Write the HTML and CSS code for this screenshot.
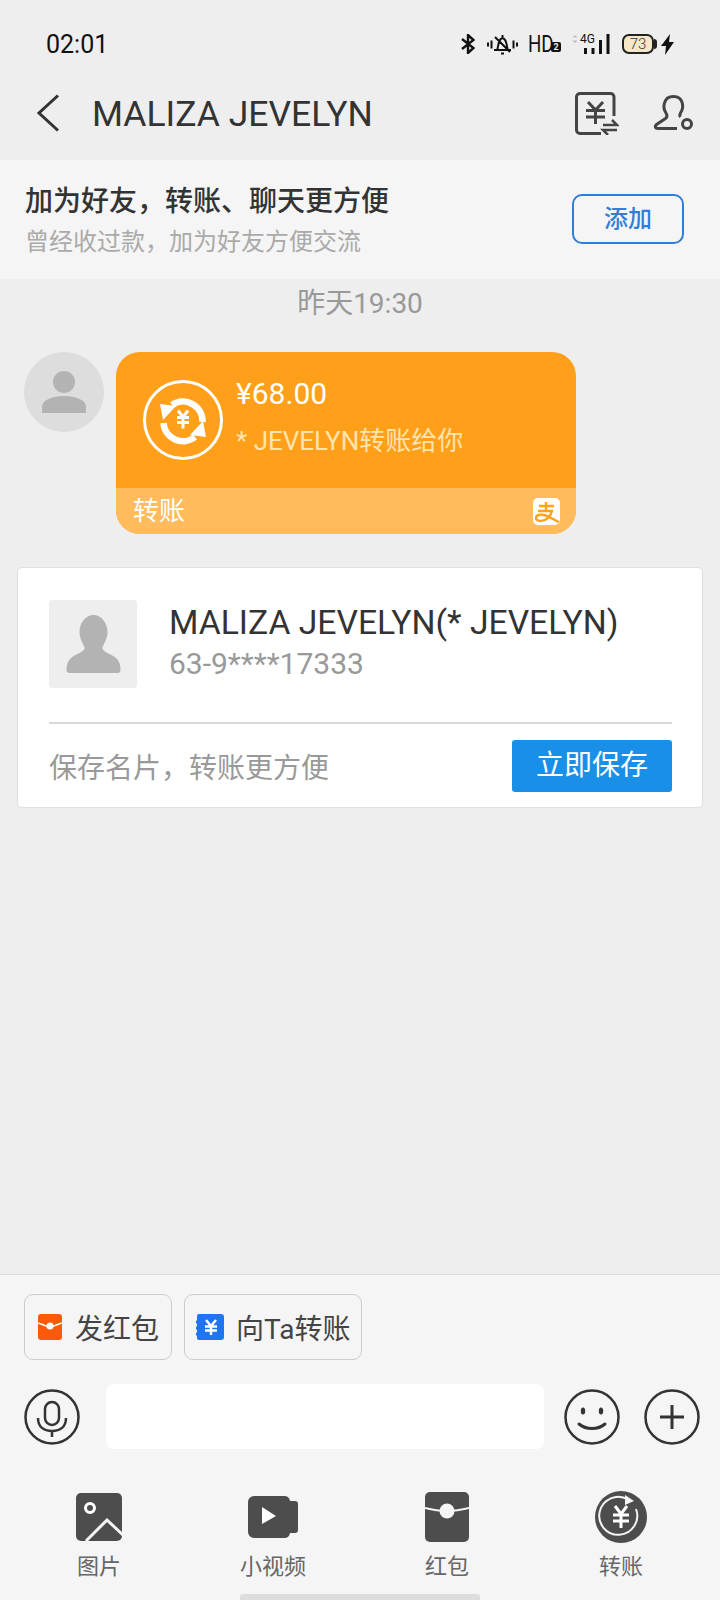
FILE: index.html
```html
<!DOCTYPE html>
<html lang="en">
<head>
    <meta charset="UTF-8">
    <meta name="viewport" content="width=device-width, initial-scale=1.0">
    <title>MALIZA JEVELYN</title>
    <link rel="stylesheet" href="styles.css">
</head>
<body>
<div class="page">

    <div class="status">
        <span class="clock">02:01</span>
        <div class="status-icons">
            <svg class="ic-bt" width="14" height="20" viewBox="0 0 14 20"><path d="M1 5 12.500 14 7 19V1l5.500 5L1 15" fill="none" stroke="#111" stroke-width="2.400"/></svg>
            <svg class="ic-bell" width="31" height="21" viewBox="0 0 31 21"><g fill="none" stroke="#111" stroke-width="2"><path d="M7 16h17M10 16c2-3 0-10 5.500-12 5.500 2 3.500 9 5.500 12M15.500 1v3M8 3l15 15M14 19.500h3"/><path d="M1 8.500v4M4.500 6.500v8M26.500 6.500v8M30 8.500v4"/></g></svg>
            <span class="hd"><span class="hd-text">HD</span><b>2</b></span>
            <div class="net">
                <span class="net-label">4G</span>
                <svg width="40" height="20" viewBox="0 0 40 20"><path d="M3 1 5.500 3.500H.5ZM3 9 5.500 6.500H.5Z" fill="#bbb"/><path d="M12 14h3v6h-3zM19.500 14h3v6h-3zM27 6h3v14h-3zM34.500 0h3v20h-3z" fill="#111"/></svg>
            </div>
            <span class="battery">73</span>
            <svg width="13" height="21" viewBox="0 0 13 21"><path d="M9 0 0 12h5l-1 9 9-13H8Z" fill="#111"/></svg>
        </div>
    </div>

    <div class="nav">
        <svg class="back" width="24" height="38" viewBox="0 0 24 38"><path d="M22 1.500 3 19l19 17.500" fill="none" stroke="#333" stroke-width="3"/></svg>
        <span class="nav-title">MALIZA JEVELYN</span>
        <svg class="nav-bill" width="44" height="43" viewBox="0 0 44 43"><g fill="none" stroke="#444" stroke-width="3"><path d="M39 24V5a3.500 3.500 0 0 0-3.500-3.500H5A3.500 3.500 0 0 0 1.500 5v33A3.500 3.500 0 0 0 5 41.500h21"/><path d="M13 10l7.500 8 7.500-8M11 18.500h19M11 25h19M20.500 18v14"/></g><path d="M28 33h14l-5-5M42 38H28l5 5" fill="none" stroke="#444" stroke-width="2.500"/></svg>
        <svg class="nav-person" width="40" height="36" viewBox="0 0 40 36"><g fill="none" stroke="#444" stroke-width="3"><path d="M24 33.500H5c-3 0-3.500-2.500-1.500-4l9-6c2-1.500 2-3 .5-5.500-3.500-5-3-16.500 7.500-16.500S31 13 27.500 18c-1 2-1 3 0 4"/><circle cx="34" cy="29" r="4.500"/></g></svg>
    </div>

    <div class="banner">
        <div class="banner-text">
            <div class="banner-title">加为好友&#xFF0C;转账、聊天更方便</div>
            <div class="banner-sub">曾经收过款&#xFF0C;加为好友方便交流</div>
        </div>
        <div class="add-btn">添加</div>
    </div>

    <div class="chat">
        <div class="time">昨天19:30</div>

        <div class="msg">
            <div class="avatar">
                <svg width="46" height="42" viewBox="0 0 46 42"><circle cx="23" cy="11" r="11" fill="#b3b3b3"/><path d="M1 42V36C1 29 11 25 23 25s22 4 22 11v6Z" fill="#b3b3b3"/></svg>
            </div>
            <div class="bubble">
                <div class="bubble-main">
                    <svg class="transfer-ic" width="80" height="80" viewBox="0 0 80 80"><circle cx="40" cy="40" r="38.500" fill="none" stroke="#fff" stroke-width="3"/><g fill="none" stroke="#fff" stroke-width="6.500"><path d="M29 25A19.500 19.500 0 0 1 59.500 42"/><path d="M52 57A19.500 19.500 0 0 1 20.500 43"/></g><path d="M17 24 33 26 20 40ZM63 57 47 55 60 41Z" fill="#fff"/><path d="M35 30.500l5 6.500 5-6.500M34 37.500h12M34 42.500h12M40 37v11.500" fill="none" stroke="#fff" stroke-width="3"/></svg>
                    <div class="transfer-text">
                        <div class="amount">¥68.00</div>
                        <div class="transfer-note">* JEVELYN转账给你</div>
                    </div>
                </div>
                <div class="bubble-foot">
                    <span class="foot-label">转账</span>
                    <svg width="27" height="27" viewBox="0 0 27 27"><rect width="27" height="27" rx="5" fill="#fff"/><path d="M6 8h15M13 4v9M5 13h14c-1 5-6 10-11 10-3 0-5-1-5-3 0-3 4-4 8-3 5 1 10 5 15 7" fill="none" stroke="#ffa31a" stroke-width="2.400"/></svg>
                </div>
            </div>
        </div>

        <div class="card">
            <div class="card-top">
                <div class="card-photo">
                    <svg width="57" height="58" viewBox="0 0 56 58"><path d="M28 0c8 0 14 8 14 17 0 6-3 11-5 15-1 3 3 5 9 8 6 3 9 7 9 15 0 2-1 3-3 3H4c-2 0-3-1-3-3 0-8 3-12 9-15s10-5 9-8c-2-4-5-9-5-15C14 8 20 0 28 0Z" fill="#b3b3b3"/></svg>
                </div>
                <div class="card-info">
                    <div class="card-name">MALIZA JEVELYN(* JEVELYN)</div>
                    <div class="card-phone">63-9****17333</div>
                </div>
            </div>
            <div class="card-bottom">
                <span class="card-hint">保存名片&#xFF0C;转账更方便</span>
                <div class="save-btn">立即保存</div>
            </div>
        </div>
    </div>

    <div class="panel">
        <div class="chips">
            <div class="chip chip-red">
                <svg width="24" height="26" viewBox="0 0 24 26"><rect width="24" height="26" rx="3" fill="#fb5a0a"/><path d="M0 9c4 1 7 3 9 3h6c2 0 5-2 9-3" fill="none" stroke="#fff" stroke-width="1.500"/><circle cx="12" cy="12" r="3.500" fill="#fff"/></svg>
                <span>发红包</span>
            </div>
            <div class="chip chip-blue">
                <svg width="28" height="26" viewBox="0 0 28 26"><path d="M3 0h22a3 3 0 0 1 3 3v20a3 3 0 0 1-3 3H3a2 2 0 0 1-2-2v-2.500a1.500 1.500 0 0 1 0-3v-3a1.500 1.500 0 0 1 0-3v-3a1.500 1.500 0 0 1 0-3V2a2 2 0 0 1 2-2Z" fill="#1f74f0"/><path d="M10 6l5 6 5-6M9 12.500h12M9 16.500h12M15 12v9" fill="none" stroke="#fff" stroke-width="2.500"/></svg>
                <span>向Ta转账</span>
            </div>
        </div>

        <div class="input-row">
            <svg width="56" height="56" viewBox="0 0 56 56"><g fill="none" stroke="#333" stroke-width="2.500"><circle cx="28" cy="28" r="26.500"/><rect x="21" y="13" width="14" height="23" rx="7"/><path d="M14 29c0 9 6 13 14 13s14-4 14-13M28 42v6"/></g></svg>
            <div class="text-box"></div>
            <svg width="56" height="56" viewBox="0 0 56 56"><g fill="none" stroke="#333" stroke-width="2.500"><circle cx="28" cy="28" r="26.500"/><path d="M15 35c7 6 19 6 26 0" stroke-width="3" stroke-linecap="round"/></g><ellipse cx="19" cy="22" rx="2.200" ry="3.500" fill="#333"/><ellipse cx="37" cy="22" rx="2.200" ry="3.500" fill="#333"/></svg>
            <svg class="plus" width="56" height="56" viewBox="0 0 56 56"><g fill="none" stroke="#333" stroke-width="2.500"><circle cx="28" cy="28" r="26.500"/><path d="M16 28h24M28 16v24" stroke-width="3"/></g></svg>
        </div>

        <div class="tools">
            <div class="tool">
                <div class="tool-ic">
                    <svg width="48" height="48" viewBox="0 0 48 48"><rect x="1" width="46" height="48" rx="5" fill="#4d4d4d"/><circle cx="15" cy="15" r="4.500" fill="none" stroke="#fff" stroke-width="3"/><path d="M11 48 32 27l16 15" fill="none" stroke="#f5f5f5" stroke-width="3"/></svg>
                </div>
                <span>图片</span>
            </div>
            <div class="tool">
                <div class="tool-ic">
                    <svg width="50" height="42" viewBox="0 0 50 42"><path d="M6 0h31a6 6 0 0 1 5 5h5a3 3 0 0 1 3 3v26a3 3 0 0 1-3 3h-5a6 6 0 0 1-5 5H6a6 6 0 0 1-6-6V6a6 6 0 0 1 6-6Z" fill="#4d4d4d"/><path d="M14 11 28 20 14 28Z" fill="#fff"/></svg>
                </div>
                <span>小视频</span>
            </div>
            <div class="tool">
                <div class="tool-ic">
                    <svg width="44" height="50" viewBox="0 0 44 50"><rect width="44" height="50" rx="5" fill="#4d4d4d"/><path d="M0 16c8 2 14 3 22 3s14-1 22-3" fill="none" stroke="#f5f5f5" stroke-width="2"/><circle cx="22" cy="19" r="7.500" fill="#f5f5f5"/></svg>
                </div>
                <span>红包</span>
            </div>
            <div class="tool">
                <div class="tool-ic">
                    <svg width="52" height="52" viewBox="0 0 52 52"><circle cx="26" cy="26" r="26" fill="#4d4d4d"/><path d="M41 18A19 19 0 1 1 33 8.500" fill="none" stroke="#f5f5f5" stroke-width="2"/><path d="M30 4 39 10 30 14Z" fill="#f5f5f5"/><path d="M20 15l6 8 6-8M18 24h16M18 30h16M26 23v14" fill="none" stroke="#fff" stroke-width="3"/></svg>
                </div>
                <span>转账</span>
            </div>
        </div>
        <div class="home-bar"></div>
    </div>

</div>
</body>
</html>
```

FILE: styles.css
```css
* {
    box-sizing: border-box;
}
body {
    margin: 0;
    font-family: Roboto, "Noto Sans CJK SC", sans-serif;
    background-color: #eeeeee;
}
.page {
    width: 720px;
    height: 1600px;
    display: flex;
    flex-direction: column;
    overflow: hidden;
}

/* status bar */
.status {
    height: 84px;
    padding: 4px 46px 0 46px;
    display: flex;
    align-items: center;
    justify-content: space-between;
    flex-shrink: 0;
}
.clock {
    font-size: 25px;
    color: #111;
}
.status-icons {
    display: flex;
    align-items: center;
}
.ic-bt {
    margin-right: 12px;
}
.ic-bell {
    margin-right: 10px;
}
.hd {
    width: 33px;
    margin-right: 11px;
    display: flex;
    align-items: flex-end;
    color: #111;
}
.hd-text {
    width: 23px;
    font-size: 24px;
    line-height: 28px;
    transform: scaleX(.78);
    transform-origin: left center;
}
.hd b {
    font-size: 9px;
    line-height: 10px;
    width: 10px;
    height: 10px;
    margin-bottom: 6px;
    text-align: center;
    background: #111;
    color: #eee;
    border-radius: 2px;
}
.net {
    position: relative;
    margin-right: 10px;
    width: 40px;
    height: 20px;
}
.net-label {
    position: absolute;
    left: 8px;
    top: 0;
    font-size: 12px;
    line-height: 10px;
    color: #111;
}
.net svg {
    display: block;
}
.battery {
    position: relative;
    width: 32px;
    height: 20px;
    border: 2px solid #222;
    border-radius: 7px;
    background: #f5e8c6;
    font-size: 15px;
    line-height: 16px;
    font-weight: 300;
    text-align: center;
    color: #333;
    margin-right: 7px;
}
.battery::after {
    content: "";
    position: absolute;
    right: -5px;
    top: 3px;
    width: 3px;
    height: 10px;
    background: #222;
    border-radius: 0 3px 3px 0;
}

/* title row */
.nav {
    height: 76px;
    padding: 0 0 18px 36px;
    display: flex;
    align-items: center;
    flex-shrink: 0;
}
.back {
    margin-right: 32px;
}
.nav-title {
    font-size: 35.5px;
    margin-top: 2px;
    color: #333;
    flex: 1;
}
.nav-bill {
    margin-right: 34px;
}
.nav-person {
    margin-right: 27px;
}

/* add friend banner */
.banner {
    height: 119px;
    padding: 0 36px 0 25px;
    background-color: #f5f5f5;
    display: flex;
    align-items: center;
    justify-content: space-between;
    flex-shrink: 0;
}
.banner-text {
    padding-top: 3px;
}
.banner-title {
    font-size: 28px;
    line-height: 38px;
    font-weight: 500;
    color: #333;
}
.banner-sub {
    font-size: 24px;
    line-height: 34px;
    margin-top: 4px;
    color: #aaa;
}
.add-btn {
    width: 112px;
    height: 50px;
    border: 2px solid #2f7fd8;
    border-radius: 10px;
    font-size: 24px;
    line-height: 46px;
    font-weight: 500;
    text-align: center;
    color: #2f7fd8;
    margin-top: -2px;
}

/* chat */
.chat {
    flex: 1;
    padding: 0 17px 0 17px;
}
.time {
    height: 50px;
    font-size: 28px;
    line-height: 50px;
    text-align: center;
    color: #999;
}
.msg {
    display: flex;
    align-items: flex-start;
    padding: 23px 0 0 7px;
}
.avatar {
    width: 80px;
    height: 80px;
    border-radius: 50%;
    background-color: #dddddd;
    margin-right: 12px;
    display: flex;
    align-items: center;
    justify-content: center;
}
.bubble {
    width: 460px;
    height: 182px;
    border-radius: 24px;
    overflow: hidden;
    background-color: #ff9f1a;
    display: flex;
    flex-direction: column;
}
.bubble-main {
    height: 136px;
    padding: 28px 0 0 27px;
    display: flex;
}
.transfer-ic {
    margin-right: 13px;
}
.transfer-text {
    margin-top: -4px;
}
.amount {
    font-size: 30px;
    line-height: 36px;
    color: #fff;
}
.transfer-note {
    font-size: 26px;
    line-height: 36px;
    margin-top: 11px;
    color: #ffe4ae;
}
.bubble-foot {
    flex: 1;
    background-color: #ffbb5c;
    padding: 0 16px 0 17px;
    display: flex;
    align-items: center;
    justify-content: space-between;
    font-size: 26px;
    color: #fff;
}
.foot-label {
    margin-bottom: 6px;
}

/* contact card */
.card {
    margin-top: 33px;
    width: 686px;
    height: 241px;
    background: #fff;
    border: 1px solid #e0e0e0;
    border-radius: 5px;
    padding: 32px 30px 0 31px;
}
.card-top {
    height: 124px;
    border-bottom: 2px solid #d8d8d8;
    display: flex;
}
.card-photo {
    width: 88px;
    height: 88px;
    background-color: #eeeeee;
    border-radius: 4px;
    display: flex;
    align-items: center;
    justify-content: center;
    margin-right: 32px;
}
.card-name {
    font-size: 33.7px;
    line-height: 44px;
    color: #333;
    margin-top: 1px;
}
.card-phone {
    font-size: 30px;
    line-height: 38px;
    color: #999;
}
.card-bottom {
    display: flex;
    align-items: center;
    justify-content: space-between;
    padding-top: 16px;
}
.card-hint {
    font-size: 28px;
    color: #999;
}
.save-btn {
    width: 160px;
    height: 52px;
    background-color: #1a8fe8;
    border-radius: 3px;
    font-size: 28px;
    line-height: 52px;
    text-align: center;
    color: #fff;
}

/* bottom panel */
.panel {
    height: 326px;
    flex-shrink: 0;
    background-color: #f5f5f5;
    border-top: 1px solid #dcdcdc;
    position: relative;
}
.chips {
    display: flex;
    padding: 19px 0 0 24px;
}
.chip {
    height: 66px;
    border: 1px solid #cccccc;
    border-radius: 9px;
    margin-right: 12px;
    display: flex;
    align-items: center;
    font-size: 28px;
    color: #444;
}
.chip-red {
    width: 148px;
    padding-left: 13px;
}
.chip-red span {
    margin-left: 13px;
}
.chip-blue {
    width: 178px;
    padding-left: 11px;
}
.chip-blue span {
    margin-left: 12px;
}
.input-row {
    display: flex;
    align-items: center;
    padding: 24px 20px 0 24px;
}
.text-box {
    width: 438px;
    height: 65px;
    background: #fff;
    border-radius: 8px;
    margin: 0 20px 0 26px;
}
.plus {
    margin-left: 24px;
}
.tools {
    display: grid;
    grid-template-columns: repeat(4, 174px);
    padding: 41px 12px 0 12px;
}
.tool {
    display: flex;
    flex-direction: column;
    align-items: center;
    font-size: 22px;
    color: #666;
}
.tool-ic {
    height: 54px;
    display: flex;
    align-items: center;
    margin-bottom: 4px;
}
.home-bar {
    position: absolute;
    left: 240px;
    bottom: 0;
    width: 240px;
    height: 6px;
    border-radius: 3px 3px 0 0;
    background-color: #dddddd;
}
```
